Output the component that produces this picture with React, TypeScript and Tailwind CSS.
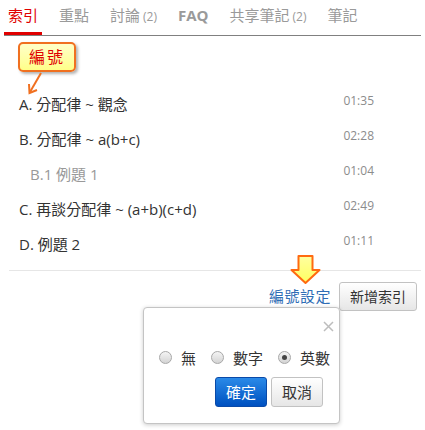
const tabs = [
  { label: "索引", active: true },
  { label: "重點" },
  { label: "討論", count: "(2)" },
  { label: "FAQ", bold: true },
  { label: "共享筆記", count: "(2)" },
  { label: "筆記" },
];

const rows = [
  { title: "A. 分配律 ~ 觀念", time: "01:35" },
  { title: "B. 分配律 ~ a(b+c)", time: "02:28" },
  { title: "B.1 例題 1", time: "01:04", sub: true },
  { title: "C. 再談分配律 ~ (a+b)(c+d)", time: "02:49" },
  { title: "D. 例題 2", time: "01:11" },
];

const radios = [
  { label: "無" },
  { label: "數字" },
  { label: "英數", checked: true },
];

const Radio = ({ checked }: { checked?: boolean }) => (
  <span className="flex items-center justify-center w-[13px] h-[13px] rounded-full border border-[#a8a8a8] bg-gradient-to-b from-[#f4f4f4] to-[#d4d4d4]">
    {checked && <span className="w-[5px] h-[5px] rounded-full bg-[#444]" />}
  </span>
);

export default function App() {
  return (
    <div className="relative w-[425px] h-[430px] overflow-hidden bg-white font-['Open_Sans','Noto_Sans_CJK_TC',sans-serif] text-[#333]">
      <nav className="flex gap-[13px] mx-[4px] border-b border-[#808080]">
        {tabs.map((t) => (
          <div
            key={t.label}
            className={
              "px-[4px] pt-[5px] pb-[5px] leading-[20px] text-[15px] border-b-[3px] whitespace-nowrap " +
              (t.active ? "border-[#e00000] text-[#e00000]" : "border-transparent text-[#9a9a9a]") +
              (t.bold ? " font-bold" : "")
            }
          >
            {t.label}
            {t.count && <span className="text-[12px] ml-[3px]">{t.count}</span>}
          </div>
        ))}
      </nav>

      <div className="ml-[9px] mr-[4px] pt-[51px]">
        <ul className="pb-[8px] border-b border-[#e6e6e6]">
          {rows.map((r) => (
            <li key={r.title} className="flex items-start justify-between h-[35px] pt-[6px] pr-[47px]">
              <span className={"text-[15px] leading-[22px] " + (r.sub ? "pl-[21px] text-[#999]" : "pl-[10px] text-[#333]")}>
                {r.title}
              </span>
              <span className="text-[12px] leading-[16px] text-[#8c8c8c]">{r.time}</span>
            </li>
          ))}
        </ul>
        <div className="flex justify-end items-center gap-[8px] mt-[11px] pr-[4px]">
          <span className="text-[15px] text-[#2f6db5] tracking-[0.5px]">編號設定</span>
          <button className="w-[78px] h-[29px] rounded-[3px] border border-[#c2c2c2] bg-gradient-to-b from-white to-[#e6e6e6] text-[14px] text-[#333]">
            新增索引
          </button>
        </div>
      </div>

      {/* annotation callout */}
      <div className="absolute left-[18px] top-[42px] w-[58px] h-[30px] flex items-center justify-center rounded-[5px] border-2 border-[#f07020] bg-gradient-to-b from-[#ffffc8] to-[#ffff88] shadow-[2px_2px_3px_rgba(0,0,0,0.3)] text-[16px] text-[#e00000] tracking-[2px]">
        編號
      </div>
      <svg className="absolute left-[24px] top-[70px]" width="24" height="26" viewBox="0 0 24 26">
        <path d="M17 3 L6 22" stroke="#f07020" strokeWidth="2" fill="none" />
        <path d="M5 14 L5.5 23 L13 20" stroke="#f07020" strokeWidth="2" fill="none" />
      </svg>

      {/* down arrow */}
      <svg className="absolute left-[289px] top-[254px]" width="33" height="31" viewBox="0 0 33 31">
        <defs>
          <linearGradient id="ya" x1="0" y1="0" x2="0" y2="1">
            <stop offset="0" stopColor="#ffffa0" />
            <stop offset="1" stopColor="#ffff60" />
          </linearGradient>
        </defs>
        <polygon
          points="9.5,2 23.5,2 23.5,16 30.5,16 16.5,29 2.5,16 9.5,16"
          fill="url(#ya)"
          stroke="#ff6a10"
          strokeWidth="2"
          strokeLinejoin="round"
        />
      </svg>

      {/* popover */}
      <div className="absolute left-[143px] top-[307px] w-[197px] h-[117px] rounded-[4px] border border-[#c4c4c4] bg-white shadow-[0_1px_4px_rgba(0,0,0,0.2)]">
        <svg className="absolute left-[179px] top-[13px]" width="11" height="11" viewBox="0 0 11 11">
          <path d="M1 1 L10 10 M10 1 L1 10" stroke="#bdbdbd" strokeWidth="1.5" />
        </svg>
        <div className="flex items-center gap-[15px] pl-[15px] pt-[40px] h-[59px]">
          {radios.map((r) => (
            <label key={r.label} className="flex items-center gap-[9px] text-[15px] text-[#333] leading-[18px]">
              <Radio checked={r.checked} />
              {r.label}
            </label>
          ))}
        </div>
        <div className="flex justify-end gap-[4px] pr-[16px] mt-[10px]">
          <button className="w-[52px] h-[30px] rounded-[3px] border border-[#0a4aa8] bg-gradient-to-b from-[#2a8ae8] to-[#0050c0] text-[15px] text-white">
            確定
          </button>
          <button className="w-[52px] h-[30px] rounded-[3px] border border-[#c2c2c2] bg-gradient-to-b from-white to-[#e6e6e6] text-[15px] text-[#333]">
            取消
          </button>
        </div>
      </div>
    </div>
  );
}
